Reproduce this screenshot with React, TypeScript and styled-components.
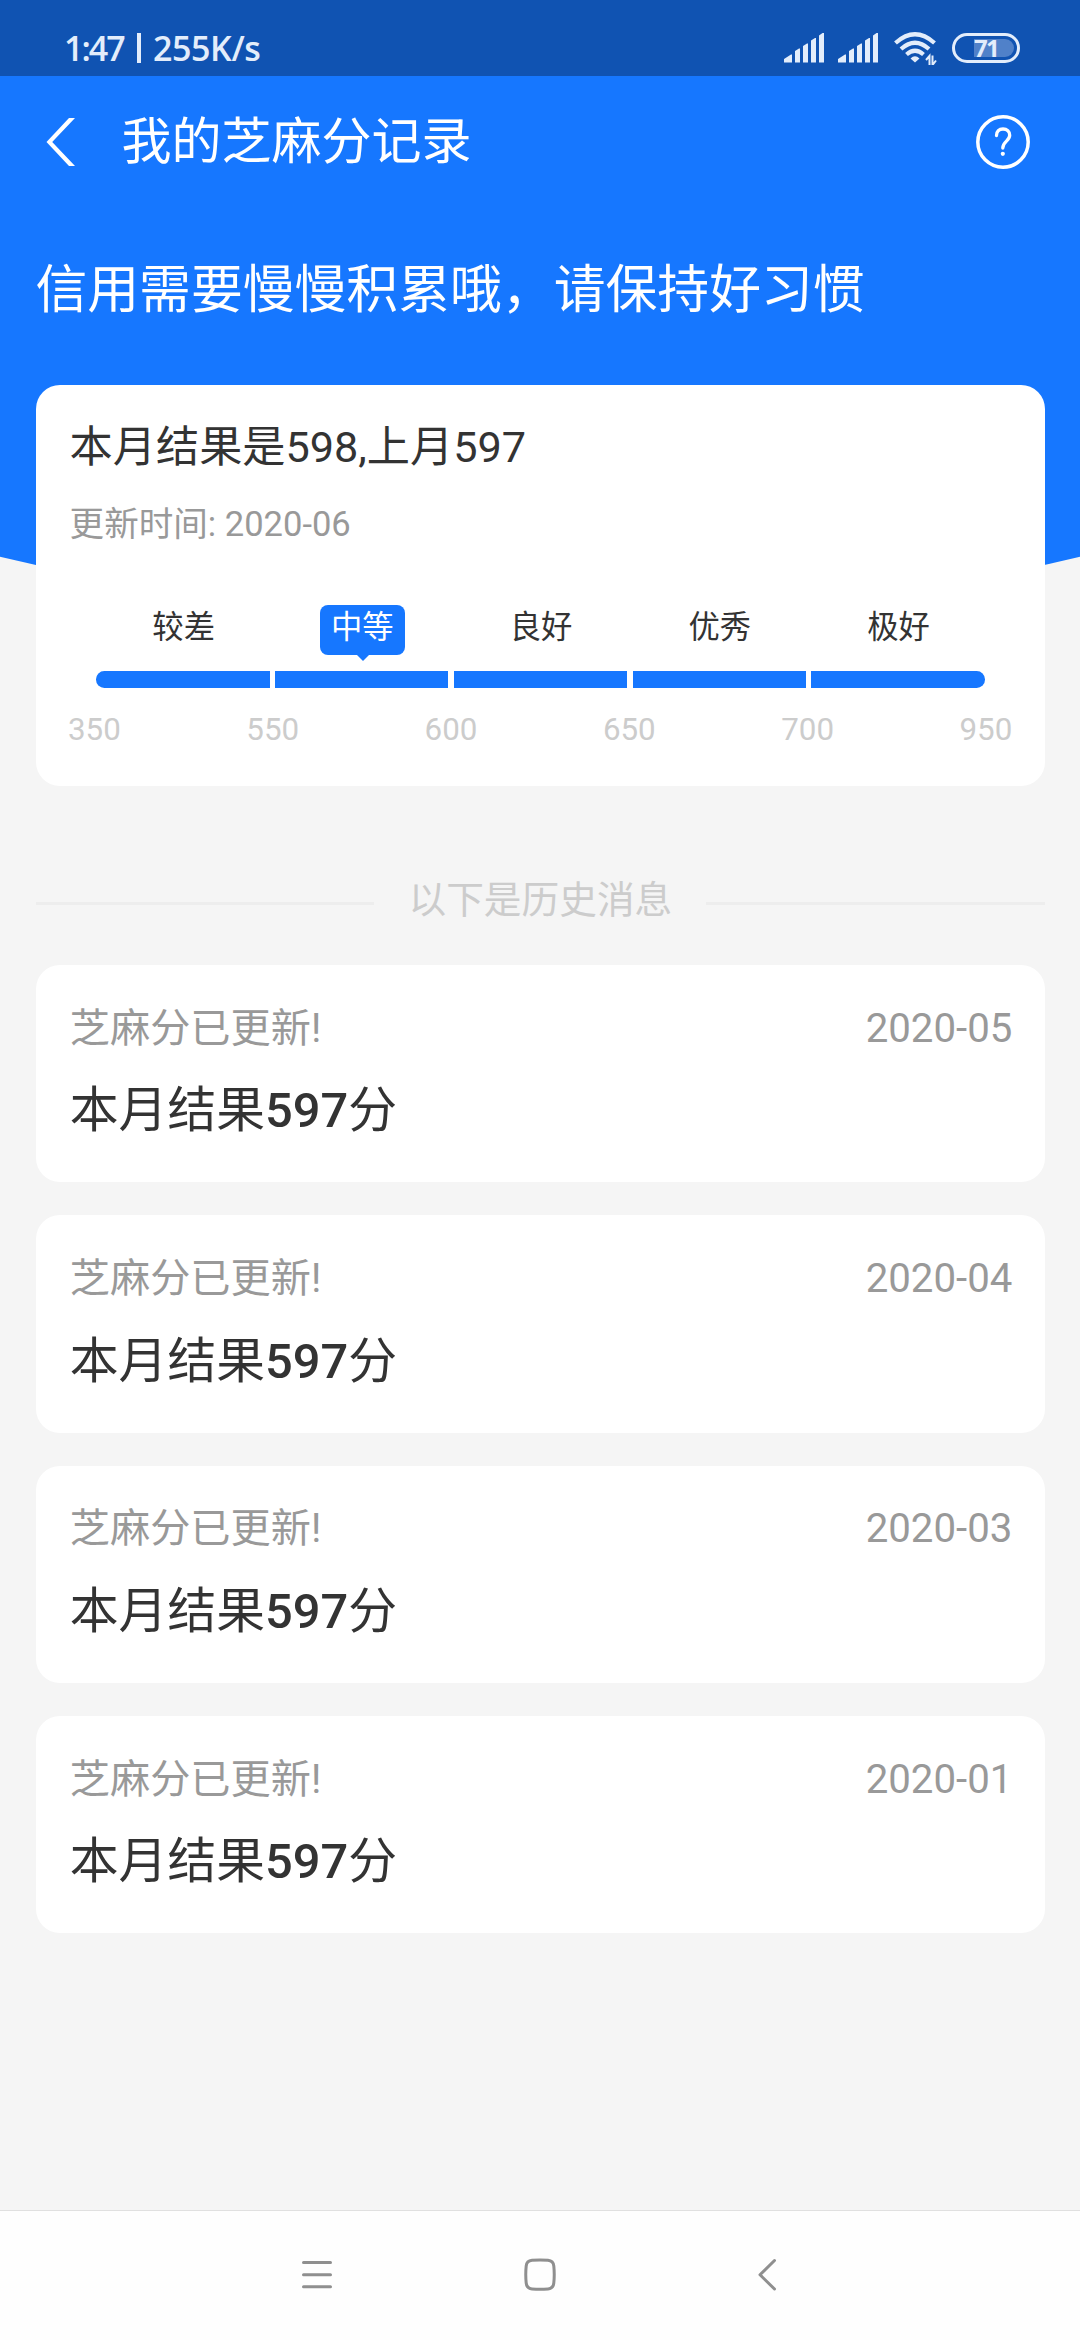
import React from "react";
import styled, { createGlobalStyle } from "styled-components";

const BLUE = "#1677ff";

const GlobalStyle = createGlobalStyle`
  * { box-sizing: border-box; }
  body {
    margin: 0;
    background: #f5f5f5;
    font-family: Roboto, "Noto Sans CJK SC", sans-serif;
    color: #333;
  }
  svg { display: block; }
`;

const Screen = styled.div`
  display: flex;
  flex-direction: column;
  width: 1080px;
  height: 2340px;
  overflow: hidden;
  background: #f5f5f5;
`;

const StatusBar = styled.header`
  display: flex;
  align-items: center;
  justify-content: space-between;
  flex: none;
  height: 76px;
  padding: 20px 60px 0 64px;
  background: #1053b2;
  color: #e3edfb;
`;

const Clock = styled.div`
  display: flex;
  align-items: center;
  font-family: "Open Sans", sans-serif;
  font-weight: 650;
  font-size: 34px;
  line-height: 40px;
`;

const Time = styled.span`
  width: 61px;
  letter-spacing: -2px;
`;

const ClockRule = styled.i`
  width: 4px;
  height: 30px;
  margin: 0 12px 0 12px;
  background: currentColor;
`;

const Speed = styled.span`
  letter-spacing: -0.4px;
`;

const StatusIcons = styled.div`
  display: flex;
  align-items: center;
  height: 32px;
`;

const StatusIcon = styled.svg<{ $gap: number }>`
  flex: none;
  margin-right: ${(p) => p.$gap}px;
`;

const Battery = styled.div`
  display: flex;
  align-items: center;
  justify-content: flex-end;
  width: 68px;
  height: 30px;
  padding-right: 3px;
  border: 3.4px solid currentColor;
  border-radius: 15px;
`;

const BatteryLevel = styled.span`
  width: 40px;
  height: 18px;
  border-radius: 0 9px 9px 0;
  background: #5081c9;
  font: 700 24px/18px "Open Sans", sans-serif;
  letter-spacing: -1.8px;
`;

const Hero = styled.div`
  flex: none;
  height: 514px;
  background: ${BLUE};
  clip-path: circle(2313.9px at 50% -1769.3px);
`;

const TitleBar = styled.nav`
  display: flex;
  align-items: center;
  height: 132px;
  padding: 0 50px 0 46px;
  color: #fff;
`;

const PageTitle = styled.h1`
  flex: 1;
  margin: 0 0 0 45.5px;
  font-weight: 400;
  font-size: 50px;
  line-height: 70px;
`;

const Slogan = styled.p`
  margin: 47px 0 0 35.4px;
  color: #fff;
  font-size: 51.84px;
  line-height: 72px;
`;

const Content = styled.main`
  flex: 1;
  margin-top: -205.3px;
  padding: 0 35.3px 0 36px;
  z-index: 1;
`;

const Card = styled.section`
  background: #fff;
  border-radius: 24px;
`;

const ScoreCard = styled(Card)`
  height: 401.6px;
  padding: 32.8px 32.4px 0 33.6px;
`;

const ScoreTitle = styled.h2`
  margin: 0;
  font-weight: 400;
  font-size: 43.2px;
  line-height: 60px;
`;

const Updated = styled.p`
  margin: 22.4px 0 57.1px;
  color: #999;
  font-size: 34.56px;
  line-height: 48px;
`;

const Levels = styled.div`
  display: grid;
  grid-template-columns: repeat(5, 1fr);
  justify-items: center;
  column-gap: 5.4px;
  margin: 0 27.2px 16.3px 27.4px;
`;

const Level = styled.span<{ $active?: boolean }>`
  position: relative;
  width: 85px;
  height: 49.7px;
  border-radius: 8px;
  background: ${(p) => (p.$active ? BLUE : "transparent")};
  color: ${(p) => (p.$active ? "#fff" : "#333")};
  font-size: 31.32px;
  line-height: 46px;
  text-align: center;

  &::after {
    content: "";
    display: ${(p) => (p.$active ? "block" : "none")};
    position: absolute;
    left: 37.5px;
    top: 100%;
    border: 6px solid transparent;
    border-top-color: ${BLUE};
    border-bottom-width: 0;
  }
`;

const Track = styled.div`
  display: grid;
  grid-template-columns: repeat(5, 1fr);
  column-gap: 5.4px;
  height: 16.7px;
  margin: 0 27.4px 0 26.6px;
  border-radius: 8.3px;
  overflow: hidden;
`;

const Segment = styled.span`
  background: ${BLUE};
`;

const Marks = styled.div`
  display: flex;
  justify-content: space-between;
  margin: 22px 0 0 -1.6px;
  color: #ccc;
  font-size: 31.32px;
  line-height: 40px;
`;

const Mark = styled.span`
  width: 52.8px;
  text-align: center;
`;

const Divider = styled.div`
  display: flex;
  align-items: center;
  gap: 34px;
  margin: 88.7px 0 40px;
  color: #ccc;
  font-size: 37.7px;
  line-height: 50px;

  &::before,
  &::after {
    content: "";
    flex: 1;
    height: 3px;
    margin-top: 7px;
    background: #ededed;
  }
`;

const History = styled.div`
  display: flex;
  flex-direction: column;
  gap: 32.8px;
`;

const HistoryCard = styled(Card)`
  height: 217.5px;
  padding: 38.9px 32.4px 0 33.8px;
`;

const HistoryHead = styled.div`
  display: flex;
  justify-content: space-between;
  color: #999;
  font-size: 40.2px;
  line-height: 50px;
`;

const HistoryResult = styled.p`
  margin: 22.6px 0 0;
  font-size: 48.8px;
  line-height: 70px;

  b { font-weight: 500; }
`;

const SystemNav = styled.footer`
  display: grid;
  grid-template-columns: 223px 233px 20px;
  align-items: center;
  flex: none;
  height: 130px;
  padding: 0 0 1px 301px;
  border-top: 1px solid #e0e0e0;
  background: #fefefe;
  color: #8f8f8f;
`;

const Signal = ({ gap }: { gap: number }) => (
  <StatusIcon $gap={gap} width="40" height="30" viewBox="0 0 40 30" fill="currentColor">
    <path d="M0 29.5V26l7-4.5h1v8zM11 29.5V18l4-2.6h1v14.1zM19 29.5V13l4-2.6h1v19.1zM27 29.5V7.500l4-2.600h1v24.600zM35 29.500V2.500L38.500 0H40v29.500z" />
  </StatusIcon>
);

const Wifi = () => (
  <StatusIcon $gap={15} width="43" height="33" viewBox="0 0 43 33" fill="none" stroke="currentColor">
    <path d="M1.500 11Q21 -6.500 40.500 11" strokeWidth="4.200" />
    <path d="M7 17Q21 4.500 35 17" strokeWidth="4.200" />
    <path d="M12.500 22.500Q21 15 29.500 22.500" strokeWidth="4.200" />
    <path d="M16.500 26.500Q21 22 25.500 26.500L21 30.500z" fill="currentColor" stroke="none" />
    <path d="M35.500 33V24L32 28M38.500 23.500V33L42 28.500" strokeWidth="2" />
  </StatusIcon>
);

const levels = ["较差", "中等", "良好", "优秀", "极好"];
const marks = [350, 550, 600, 650, 700, 950];
const months = ["2020-05", "2020-04", "2020-03", "2020-01"];

export default function App() {
  return (
    <>
      <GlobalStyle />
      <Screen>
        <StatusBar>
          <Clock>
            <Time>1:47</Time>
            <ClockRule />
            <Speed>255K/s</Speed>
          </Clock>
          <StatusIcons>
            <Signal gap={14} />
            <Signal gap={16} />
            <Wifi />
            <Battery>
              <BatteryLevel>71</BatteryLevel>
            </Battery>
          </StatusIcons>
        </StatusBar>

        <Hero>
          <TitleBar>
            <svg width="30" height="48" viewBox="0 0 30 48" fill="currentColor">
              <path d="M0.500 24L23 0h6L6.200 24L29 48h-6z" />
            </svg>
            <PageTitle>我的芝麻分记录</PageTitle>
            <svg width="54" height="54" viewBox="0 0 54 54" fill="none" stroke="currentColor" strokeLinecap="round">
              <circle cx="27" cy="27" r="25.200" strokeWidth="3.500" />
              <path d="M20.500 20.500c0-4 2.500-6.500 6.500-6.500s6.700 2.500 6.700 6.300c0 5.700-6.900 6-6.900 12.700" strokeWidth="3.300" />
              <circle cx="26.800" cy="38.800" r="2.100" fill="currentColor" stroke="none" />
            </svg>
          </TitleBar>
          <Slogan>信用需要慢慢积累哦，请保持好习惯</Slogan>
        </Hero>

        <Content>
          <ScoreCard>
            <ScoreTitle>本月结果是598,上月597</ScoreTitle>
            <Updated>更新时间: 2020-06</Updated>
            <Levels>
              {levels.map((name) => (
                <Level key={name} $active={name === "中等"}>{name}</Level>
              ))}
            </Levels>
            <Track>
              {levels.map((name) => <Segment key={name} />)}
            </Track>
            <Marks>
              {marks.map((mark) => <Mark key={mark}>{mark}</Mark>)}
            </Marks>
          </ScoreCard>

          <Divider>以下是历史消息</Divider>

          <History>
            {months.map((month) => (
              <HistoryCard key={month}>
                <HistoryHead>
                  <span>芝麻分已更新!</span>
                  <span>{month}</span>
                </HistoryHead>
                <HistoryResult>本月结果<b>597</b>分</HistoryResult>
              </HistoryCard>
            ))}
          </History>
        </Content>

        <SystemNav>
          <svg width="32" height="34" viewBox="0 0 32 34" stroke="currentColor" strokeWidth="3" strokeLinecap="round">
            <path d="M2.500 4.500h27M2.500 16.700h27M2.500 28.700h27" />
          </svg>
          <svg width="32" height="34" viewBox="0 0 32 34" fill="none" stroke="currentColor" strokeWidth="3">
            <path d="M8 2.300Q16 1.500 24 2.300Q29.300 2.800 29.800 8Q30.700 16.500 29.800 25Q29.300 30.500 24 30.900Q16 31.700 8 30.900Q2.700 30.500 2.200 25Q1.300 16.500 2.200 8Q2.700 2.800 8 2.300z" />
          </svg>
          <svg width="20" height="34" viewBox="0 0 20 34" fill="none" stroke="currentColor" strokeWidth="3" strokeLinecap="round" strokeLinejoin="round">
            <path d="M17.500 2.500L3 16.800L17.500 31" />
          </svg>
        </SystemNav>
      </Screen>
    </>
  );
}
